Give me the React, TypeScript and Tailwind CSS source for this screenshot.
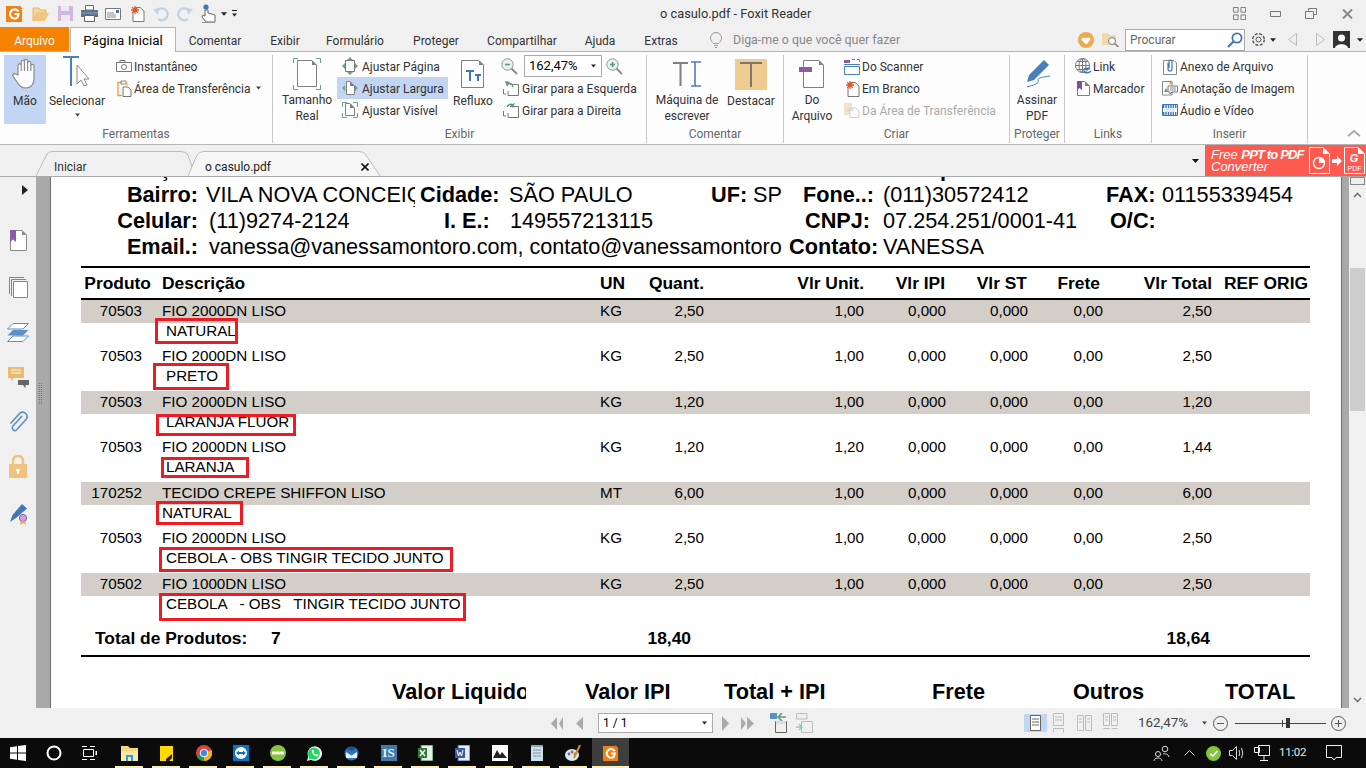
import React from "react";

const S = ({ w, h, children, className }: { w: number; h: number; children: React.ReactNode; className?: string }) => (
  <svg width={w} height={h} viewBox={`0 0 ${w} ${h}`} fill="none" className={"shrink-0 " + (className ?? "")}>
    {children}
  </svg>
);
const Doc = ({ x = 0, y = 0, w = 14, h = 18, c = "#7f7f7f", f = "#fff" }: any) => (
  <g>
    <path d={`M${x + .5} ${y + .5}H${x + w - 5}L${x + w - .5} ${y + 5}V${y + h - .5}H${x + .5}Z`} stroke={c} fill={f} />
    <path d={`M${x + w - 5} ${y + .5}V${y + 5}H${x + w - .5}Z`} fill={c} />
  </g>
);

/* ---------- title bar icons ---------- */
const FoxitLogo = ({ s = 17 }: { s?: number }) => (
  <svg width={s} height={s} viewBox="0 0 17 17" className="shrink-0">
    <path d="M0 1H12L16 5V17H0Z" fill="#f47f13" />
    <path d="M13 0L17 4H13Z" fill="#f47f13" />
    <path d="M12.5 6.5A4.6 4.6 0 1 0 11.5 12.5L12.5 9H8.5" stroke="#fff" strokeWidth="2.2" fill="none" />
  </svg>
);
const QOpen = () => (
  <S w={18} h={16}><path d="M1 2H7L9 4H14V7H5L1 15Z" fill="#f3d79e" stroke="#e5b566" /><path d="M5 7H17L13 15H1Z" fill="#f0c67e" /></S>
);
const QSave = () => (
  <S w={15} h={15}><path d="M0 0H15V15H0Z" fill="#cdb9db" /><path d="M3 0H11V5H3Z" fill="#efe8f4" /><path d="M3 9H12V15H3Z" fill="#efe8f4" /></S>
);
const QPrint = () => (
  <S w={17} h={17}><path d="M4.5.5H12.5V5H4.5Z" stroke="#666" fill="#fff" /><path d="M0 5H17V12H0Z" fill="#6d7278" /><path d="M0 7H17V9H0Z" fill="#5b8fbf" /><path d="M3.5 10.5H13.5V16.5H3.5Z" stroke="#666" fill="#fff" /></S>
);
const QMail = () => (
  <S w={16} h={12}><path d="M.5 .5H15.5V11.5H.5Z" stroke="#777" fill="#fff" /><path d="M2 5H9M2 7H11M2 9H11" stroke="#888" /><path d="M11 2H14V5H11Z" fill="#3f77b5" /></S>
);
const Star = ({ x = 4, y = 4, r = 4 }: any) => (
  <g stroke="#e2562c" strokeWidth="1.3"><path d={`M${x - r} ${y}H${x + r}M${x} ${y - r}V${y + r}M${x - r * .7} ${y - r * .7}L${x + r * .7} ${y + r * .7}M${x - r * .7} ${y + r * .7}L${x + r * .7} ${y - r * .7}`} /></g>
);
const QNew = () => (
  <S w={15} h={17}><path d="M5 2.5H10L14 6V16.5H3V7" stroke="#777" fill="#fff" /><Star x={5} y={5} r={4} /></S>
);
const Undo = ({ flip }: { flip?: boolean }) => (
  <S w={16} h={16} className={flip ? "-scale-x-100" : ""}><path d="M3 6.5A6 6 0 1 1 5 13" stroke="#bcd0e6" strokeWidth="2.2" /><path d="M0 3L6 2.5 5 9Z" fill="#bcd0e6" /></S>
);
const QHand = () => (
  <S w={16} h={20}><circle cx="5" cy="3" r="2.6" fill="#3f77b5" /><path d="M4 6V12L2 11 1 13 5 18H14V11L7 9V6Z" fill="#fff" stroke="#666" /><path d="M1 18.5H14" stroke="#999" /></S>
);
const Caret = ({ c = "#333", w = 7 }: { c?: string; w?: number }) => (
  <svg width={w} height={4} viewBox="0 0 7 4" className="shrink-0"><path d="M0 0H7L3.5 4Z" fill={c} /></svg>
);

/* ---------- ribbon icons ---------- */
const HandBig = () => (
  <S w={26} h={32}>
    <path d="M6 17V7.5a1.6 1.6 0 0 1 3.2 0V13V4a1.6 1.6 0 0 1 3.2 0V13V3a1.6 1.6 0 0 1 3.2 0V13V5a1.6 1.6 0 0 1 3.2 0V13V8a1.6 1.6 0 0 1 3.2 0V21c0 5-3 9-8 9s-7-2-9-6L1 18c-1-2 2-3 3-2Z" fill="#fff" stroke="#8a8a8a" strokeWidth="1.2" />
  </S>
);
const TCursor = () => (
  <S w={28} h={36}>
    <path d="M0 1H16M8 1V30" stroke="#4a7ebb" strokeWidth="2" />
    <path d="M14 9V28L18 24 21 30 24 29 21 23H26Z" fill="#fff" stroke="#8a8a8a" />
  </S>
);
const Camera = () => (
  <S w={16} h={12}><path d="M.5 2.5H15.5V11.5H.5Z" stroke="#777" fill="#fff" /><path d="M4 2V.5H9V2" stroke="#777" /><circle cx="8" cy="7" r="2.5" stroke="#777" /></S>
);
const Clip = () => (
  <S w={15} h={17}><path d="M5 2.5H1V15.5H5" stroke="#e5a64b" strokeWidth="1.4" /><path d="M4 1H9V4H4Z" stroke="#888" /><path d="M9 2.5H10V6" stroke="#e5a64b" /><path d="M6 7H11L14 10V16.5H6Z" stroke="#777" fill="#fff" /></S>
);
const Corners = ({ w, h, c = "#6aa18f" }: any) => (
  <path d={`M.5 5V.5H5M${w - 5} .5H${w - .5}V5M${w - .5} ${h - 5}V${h - .5}H${w - 5}M5 ${h - .5}H.5V${h - 5}`} stroke={c} />
);
const RealSize = () => (
  <S w={28} h={32}><Corners w={28} h={32} /><Doc x={4} y={2} w={20} h={27} /></S>
);
const FitPage = () => (
  <S w={18} h={18}><path d="M9 0L6 3H12ZM9 18L6 15H12Z" fill="#6aa18f" /><path d="M1 9L4 6V12ZM17 9L14 6V12Z" fill="#6aa18f" /><path d="M4.5 3.5H13.5V14.5H4.5Z" stroke="#777" fill="#fff" /></S>
);
const FitWidth = () => (
  <S w={16} h={14}><path d="M0 7L3 4V10ZM16 7L13 4V10Z" fill="#6aa18f" /><Doc x={4} y={0} w={9} h={14} /></S>
);
const FitVis = () => (
  <S w={16} h={16}><Corners w={16} h={16} /><Doc x={3} y={1} w={10} h={13} /></S>
);
const Reflow = () => (
  <S w={24} h={28}>
    <Doc x={0} y={0} w={23} h={28} />
    <path d="M5 11H13M9 11V21M14 15H20M17 15V21" stroke="#3f77b5" strokeWidth="2" />
  </S>
);
const Zoom = ({ plus }: { plus?: boolean }) => (
  <S w={17} h={17}>
    <circle cx="6.5" cy="6.5" r="5.7" fill="#e7f1ec" stroke="#8a9a94" />
    <path d="M4 6.5H9" stroke="#5c9a80" strokeWidth="1.6" />
    {plus && <path d="M6.5 4V9" stroke="#5c9a80" strokeWidth="1.6" />}
    <path d="M10.5 10.5L16 16" stroke="#888" strokeWidth="1.8" />
  </S>
);
const Rotate = ({ flip }: { flip?: boolean }) => (
  <S w={16} h={16}>
    <path d="M7 4.5H15.5V15.5H5V11" stroke="#777" fill="#fff" />
    <path d="M.5 9V14M.5 14H3" stroke="#777" />
    <path d={flip ? "M4 5Q6 1 10 3" : "M10 7Q9 2 4 4"} stroke="#5c9a80" strokeWidth="1.5" />
    <path d={flip ? "M12 1L10 6 7 3Z" : "M2 1L7 2 4 7Z"} fill="#5c9a80" />
  </S>
);
const Typewriter = () => (
  <S w={30} h={26}>
    <path d="M1 2H16M8.5 2V25" stroke="#7f7f7f" strokeWidth="2" />
    <path d="M19 1H23V25H19M23 25H29M29 1H23" stroke="#4a7ebb" strokeWidth="1.6" />
  </S>
);
const Highlight = () => (
  <div className="w-[32px] h-[31px] bg-[#f0cb8f] flex items-center justify-center">
    <S w={24} h={26}><path d="M1 2H23M12 2V26" stroke="#777" strokeWidth="2" /></S>
  </div>
);
const FromFile = () => (
  <S w={26} h={28}><Doc x={4} y={0} w={21} h={28} /><path d="M0 7H13V12H0Z" fill="#8d5ba6" /></S>
);
const Scanner = () => (
  <S w={16} h={17}><path d="M0 2H6V5H0Z" fill="#8d5ba6" /><path d="M8 1.5H11M13 1.5H15.5V4" stroke="#888" /><path d="M.5 8.5H15.5M.5 8.5V16.5H15.5V8.5" stroke="#4a7ebb" /><path d="M0 6.5H16" stroke="#4a7ebb" /></S>
);
const Pasted = () => (
  <S w={16} h={16} className="opacity-40"><path d="M0 1H8V13H0Z" fill="#e5c07a" /><path d="M6 6H12L15 9V15.5H6Z" stroke="#888" fill="#fff" /><path d="M3 8H9" stroke="#8d5ba6" /></S>
);
const Pen = () => (
  <S w={28} h={30}>
    <path d="M21 1L26 6 11 21 4 23 6 16Z" fill="#4a7ebb" />
    <path d="M4 28C10 26 17 25 15 21C14 19 20 18 27 17" stroke="#4a7ebb" />
  </S>
);
const Globe = () => (
  <S w={17} h={16}>
    <circle cx="7.5" cy="7.5" r="7" stroke="#777" fill="#fff" />
    <path d="M.5 7.5H14.5M7.5.5V14.5M2 3.5H13M2 11.5H13" stroke="#777" />
    <ellipse cx="7.5" cy="7.5" rx="3.5" ry="7" stroke="#777" />
    <path d="M8 12Q12 9 15 11M9 14Q13 16 16 13" stroke="#3f77b5" strokeWidth="1.6" />
  </S>
);
const Bookmark = () => (
  <S w={13} h={15}><Doc x={0} y={0} w={13} h={15} /><path d="M0 0H5V9L2.5 7 0 9Z" fill="#7d4e9a" /></S>
);
const Attach = () => (
  <S w={14} h={17}><path d="M.5 2.5H11L13.5 5V16.5H.5Z" stroke="#888" fill="#fff" /><path d="M5 5V11a2 2 0 0 0 4 0V3.5a1.5 1.5 0 0 0-3 0V10" stroke="#3f77b5" strokeWidth="1.2" /></S>
);
const ImgNote = () => (
  <S w={16} h={16}>
    <path d="M.5 1.5H10V15H.5Z" stroke="#888" fill="#fff" />
    <path d="M2 12L4 8 6 12Z" fill="#5c9a80" />
    <circle cx="9" cy="3" r="1.5" fill="#e5a64b" />
    <path d="M6 6H15.5V12H10L8 14V12H6Z" stroke="#777" fill="#fff" />
    <path d="M8 8H14M8 10H14" stroke="#888" />
  </S>
);
const Film = () => (
  <S w={16} h={12}><path d="M.5 .5H15.5V11.5H.5Z" stroke="#3f77b5" fill="#fff" /><path d="M1 2.5H15M1 9.5H15" stroke="#3f77b5" strokeWidth="3" strokeDasharray="1.4 1" /><path d="M3 4H13V8H3Z" fill="#dfe9f4" /></S>
);

/* ---------- ribbon helpers ---------- */
const Big = ({ w, icon, lines, active, tail }: { w: number; icon: React.ReactNode; lines: string[]; active?: boolean; tail?: React.ReactNode }) => (
  <div style={{ width: w }} className={"h-[69px] flex flex-col items-center shrink-0 " + (active ? "bg-[#c2d5f2]" : "")}>
    <div className="h-[38px] flex items-center justify-center">{icon}</div>
    {lines.map((l) => (
      <div key={l} className="h-[16px] leading-[16px] text-center whitespace-nowrap">{l}</div>
    ))}
    {tail}
  </div>
);
const Small = ({ icon, text, active, disabled, iw = 20, tail }: { icon: React.ReactNode; text: string; active?: boolean; disabled?: boolean; iw?: number; tail?: React.ReactNode }) => (
  <div className={"h-[22px] flex items-center whitespace-nowrap " + (active ? "bg-[#c2d5f2] " : "") + (disabled ? "text-[#aaa]" : "")}>
    <div style={{ width: iw }} className="flex items-center justify-center shrink-0">{icon}</div>
    <span className="pt-[2px]">{text}</span>
    {tail}
  </div>
);
const Group = ({ w, label, children }: { w: number; label: string; children: React.ReactNode }) => (
  <div style={{ width: w }} className="h-[88px] shrink-0 flex flex-col border-r border-[#c8c8c8]">
    <div className="h-[71px] flex">{children}</div>
    <div className="h-[16px] leading-[16px] text-center text-[#666]">{label}</div>
  </div>
);

/* ---------- document data ---------- */
type It = [string, string, string, string, string, string, string];
const items: { r: It; sub: string; gray: boolean; left: string }[] = [
  { r: ["70503", "FIO 2000DN LISO", "KG", "2,50", "1,00", "0,00", "2,50"], sub: "NATURAL", gray: true, left: "pl-[4px]" },
  { r: ["70503", "FIO 2000DN LISO", "KG", "2,50", "1,00", "0,00", "2,50"], sub: "PRETO", gray: false, left: "pl-[4px]" },
  { r: ["70503", "FIO 2000DN LISO", "KG", "1,20", "1,00", "0,00", "1,20"], sub: "LARANJA FLUOR", gray: true, left: "pl-[4px]" },
  { r: ["70503", "FIO 2000DN LISO", "KG", "1,20", "1,20", "0,00", "1,44"], sub: "LARANJA", gray: false, left: "pl-[4px]" },
  { r: ["170252", "TECIDO CREPE SHIFFON LISO", "MT", "6,00", "1,00", "0,00", "6,00"], sub: "NATURAL", gray: true, left: "" },
  { r: ["70503", "FIO 2000DN LISO", "KG", "2,50", "1,00", "0,00", "2,50"], sub: "CEBOLA - OBS TINGIR TECIDO JUNTO", gray: false, left: "pl-[4px]" },
  { r: ["70502", "FIO 1000DN LISO", "KG", "2,50", "1,00", "0,00", "2,50"], sub: "CEBOLA \u00a0 - OBS \u00a0 TINGIR TECIDO JUNTO", gray: true, left: "pl-[4px]" },
];
const boxes = [
  "left-[104px] top-[141px] w-[83px] h-[26px]",
  "left-[102px] top-[186px] w-[76px] h-[27px]",
  "left-[105px] top-[237px] w-[140px] h-[22px]",
  "left-[110px] top-[280px] w-[88px] h-[21px]",
  "left-[105px] top-[324px] w-[87px] h-[24px]",
  "left-[108px] top-[370px] w-[294px] h-[25px]",
  "left-[108px] top-[416px] w-[307px] h-[28px]",
];

const Cell = ({ c, children }: { c: string; children?: React.ReactNode }) => <div className={c}>{children}</div>;

const Page = () => (
  <div className="relative flex-1 min-w-0 bg-white overflow-hidden font-['Liberation_Sans',Arial,sans-serif] text-black">
    {/* info block */}
    <div className="-mt-[21px] text-[21.7px] leading-[26px] whitespace-nowrap">
      <div className="h-[26px] flex">
        <div className="w-[119px] text-right">ç</div>
        <div className="ml-[770px] font-bold">p</div>
      </div>
      <div className="h-[26px] flex">
        <div className="w-[147px] text-right font-bold">Bairro:</div>
        <div className="ml-[8px] w-[209px] overflow-hidden">VILA NOVA CONCEIÇÃO</div>
        <div className="ml-[5px] w-[89px] font-bold">Cidade:</div>
        <div className="w-[202px]">SÃO PAULO</div>
        <div className="w-[42px] font-bold">UF:</div>
        <div className="w-[50px]">SP</div>
        <div className="w-[80px] font-bold">Fone..:</div>
        <div className="w-[223px]">(011)30572412</div>
        <div className="w-[56px] font-bold">FAX:</div>
        <div>01155339454</div>
      </div>
      <div className="h-[26px] flex">
        <div className="w-[147px] text-right font-bold">Celular:</div>
        <div className="ml-[11px] w-[235px]">(11)9274-2124</div>
        <div className="w-[66px] font-bold">I. E.:</div>
        <div className="w-[295px]">149557213115</div>
        <div className="w-[78px] font-bold">CNPJ:</div>
        <div className="w-[227px]">07.254.251/0001-41</div>
        <div className="font-bold">O/C:</div>
      </div>
      <div className="h-[26px] flex">
        <div className="w-[147px] text-right font-bold">Email.:</div>
        <div className="ml-[11px] w-[580px] tracking-[-0.06px]">vanessa@vanessamontoro.com, contato@vanessamontoro</div>
        <div className="w-[94px] font-bold">Contato:</div>
        <div>VANESSA</div>
      </div>
    </div>

    {/* table */}
    <div className="ml-[30px] w-[1229px] mt-[6px]">
      <div className="h-[34px] border-t-2 border-b-2 border-black flex items-center text-[17.4px] font-bold whitespace-nowrap">
        <Cell c="w-[70px] text-right">Produto</Cell>
        <Cell c="ml-[11px] w-[438px]">Descrição</Cell>
        <Cell c="w-[40px]">UN</Cell>
        <Cell c="w-[64px] text-right">Quant.</Cell>
        <Cell c="w-[160px] text-right">Vlr Unit.</Cell>
        <Cell c="w-[81px] text-right">Vlr IPI</Cell>
        <Cell c="w-[82px] text-right">Vlr ST</Cell>
        <Cell c="w-[73px] text-right">Frete</Cell>
        <Cell c="w-[112px] text-right">Vlr Total</Cell>
        <Cell c="w-[96px] text-right">REF ORIG</Cell>
      </div>
      <div className="text-[15.2px] whitespace-nowrap">
        {items.map((it, i) => (
          <div key={i}>
            <div className={"h-[22.75px] flex items-center " + (it.gray ? "bg-[#d3cfc8]" : "")}>
              <Cell c="w-[61px] text-right">{it.r[0]}</Cell>
              <Cell c="ml-[20px] w-[438px]">{it.r[1]}</Cell>
              <Cell c="w-[40px]">{it.r[2]}</Cell>
              <Cell c="w-[64px] text-right">{it.r[3]}</Cell>
              <Cell c="w-[160px] text-right">{it.r[4]}</Cell>
              <Cell c="w-[82px] text-right">0,000</Cell>
              <Cell c="w-[82px] text-right">0,000</Cell>
              <Cell c="w-[75px] text-right">{it.r[5]}</Cell>
              <Cell c="w-[109px] text-right">{it.r[6]}</Cell>
            </div>
            <div className="h-[22.75px] pb-[6px] flex items-center">
              <div className={"ml-[81px] " + it.left}>{it.sub}</div>
            </div>
          </div>
        ))}
      </div>
      <div className="mt-[8px] h-[30px] pb-[5px] border-b-2 border-black flex items-center text-[17.4px] font-bold whitespace-nowrap">
        <Cell c="ml-[14px] w-[176px]">Total de Produtos:</Cell>
        <Cell c="w-[100px]">7</Cell>
        <Cell c="w-[320px] text-right">18,40</Cell>
        <Cell c="w-[519px] text-right">18,64</Cell>
      </div>
    </div>

    {/* totals */}
    <div className="mt-[22px] h-[26px] flex text-[21.7px] leading-[26px] font-bold whitespace-nowrap">
      <div className="ml-[341px] w-[134px] overflow-hidden">Valor Liquido</div>
      <div className="ml-[59px] w-[139px]">Valor IPI</div>
      <div className="w-[208px]">Total + IPI</div>
      <div className="w-[141px]">Frete</div>
      <div className="w-[152px]">Outros</div>
      <div>TOTAL</div>
    </div>

    {/* red annotation boxes */}
    {boxes.map((b) => (
      <div key={b} className={"absolute border-[3px] border-[#ed1c24] " + b} />
    ))}
  </div>
);

/* ---------- side panel ---------- */
const SideIcons = () => (
  <div className="w-[36px] shrink-0 flex flex-col items-center bg-[#f0f0f0]">
    <svg width="6" height="10" viewBox="0 0 6 10" className="mt-[8px] ml-[14px]"><path d="M0 0L6 5 0 10Z" fill="#222" /></svg>
    <S w={17} h={21} className="mt-[35px]"><Doc x={0} y={0} w={17} h={21} c="#888" /><path d="M0 0H6V12L3 9.5 0 12Z" fill="#8d5ba6" /></S>
    <S w={19} h={21} className="mt-[26px]"><path d="M.5 .5H15M.5 .5V17M2.5 2.5H17M2.5 2.5V19" stroke="#5b8fc7" /><path d="M4.5 4.5H18.5V20.5H4.5Z" stroke="#5b8fc7" fill="#fff" /></S>
    <S w={22} h={19} className="mt-[25px]"><path d="M6 .5H21.5L16 6H.5Z" stroke="#5b8fc7" fill="#fff" /><path d="M6 7H21.5L16 12.5H.5Z" fill="#5b8fc7" /><path d="M6 13H21.5L16 18.5H.5Z" stroke="#5b8fc7" fill="#fff" /></S>
    <S w={21} h={21} className="mt-[25px]"><path d="M0 0H16V11H6L3 14V11H0Z" fill="#edb96b" /><path d="M3 3H13M3 6H13" stroke="#fff" /><path d="M10 13H21V18H18L17 21 15 18H10Z" fill="#666" /></S>
    <S w={19} h={23} className="mt-[21px]"><path d="M13 5L4 15a2.6 2.6 0 0 0 3.7 3.7L17 8.5a4.4 4.4 0 0 0-6.2-6.2L1.5 12.5" transform="translate(0 2)" stroke="#5b8fc7" strokeWidth="1.6" /></S>
    <S w={18} h={23} className="mt-[23px]"><path d="M4 10V6a5 5 0 0 1 10 0V10" stroke="#edc37e" strokeWidth="2.4" /><path d="M0 9H18V23H0Z" fill="#edc37e" /><path d="M7 14H11V16H10V19H8V16H7Z" fill="#fff" /></S>
    <S w={20} h={22} className="mt-[25px]"><path d="M14 1L19 5.5 8 15 2 19 4.5 12Z" fill="#3f77b5" /><circle cx="15" cy="15" r="3.6" fill="#c7a6d8" stroke="#8d5ba6" /><path d="M13 18L12 22 15 20 18 22 17 18" fill="#e5a64b" /></S>
  </div>
);

/* ---------- task bar ---------- */
const TB = ({ children, active }: { children: React.ReactNode; active?: boolean }) => (
  <div className={"relative h-[30px] w-[37px] shrink-0 flex items-center justify-center " + (active ? "bg-[#3e3e3e]" : "")}>
    {children}
    <div className={"absolute bottom-0 h-[2px] bg-[#fdeeb8] " + (active ? "inset-x-0" : "left-[4px] right-[5px]")} />
  </div>
);
const tab = "flex items-center justify-center pt-[3px]";

export default function App() {
  return (
    <div className="w-[1366px] h-[768px] overflow-hidden flex flex-col bg-[#f0f0f0] text-[12px] text-[#333] font-['Roboto','Noto_Sans',sans-serif]">
      {/* title bar */}
      <div className="h-[27px] shrink-0 flex items-center relative">
        <div className="ml-[6px] flex items-center">
          <FoxitLogo />
          <div className="ml-[9px]"><QOpen /></div>
          <div className="ml-[8px]"><QSave /></div>
          <div className="ml-[8px]"><QPrint /></div>
          <div className="ml-[7px]"><QMail /></div>
          <div className="ml-[9px]"><QNew /></div>
          <div className="ml-[8px]"><Undo /></div>
          <div className="ml-[8px]"><Undo flip /></div>
          <div className="ml-[8px]"><QHand /></div>
          <div className="ml-[4px]"><Caret c="#222" w={6} /></div>
          <div className="ml-[5px] flex flex-col gap-[2px] items-center"><div className="w-[5px] h-px bg-[#222]" /><Caret c="#222" w={5} /></div>
        </div>
        <div className="absolute left-[660px] top-[5px] text-[12.8px] leading-[17px] whitespace-nowrap">o casulo.pdf - Foxit Reader</div>
        <div className="ml-auto flex items-center">
          <div className="w-[36px] flex justify-center"><S w={13} h={13}><path d="M0 0H5V5H0ZM8 0H13V5H8ZM0 8H5V13H0ZM8 8H13V13H8Z" stroke="#777" transform="translate(.5 .5) scale(.93)" /></S></div>
          <div className="w-[36px] flex justify-center"><S w={11} h={6}><path d="M.5 .5H10.5V5.5H.5Z" stroke="#777" /></S></div>
          <div className="w-[36px] flex justify-center"><S w={12} h={11}><path d="M3.5 2.5V.5H11.5V6.5H8.5M.5 3.5H8.5V10.5H.5Z" stroke="#777" /></S></div>
          <div className="w-[36px] flex justify-center"><S w={11} h={10}><path d="M1 .5L10 9.5M10 .5L1 9.5" stroke="#888" strokeWidth="2" /></S></div>
          <div className="w-[1px]" />
        </div>
      </div>

      {/* ribbon tabs */}
      <div className="h-[25px] shrink-0 flex border-b border-[#b5b5b5] whitespace-nowrap">
        <div className={"w-[69px] h-[24px] bg-[#f58200] text-white " + tab}>Arquivo</div>
        <div className={"ml-px w-[106px] h-[25px] bg-[#fdfdfd] border-x border-t border-[#b5b5b5] text-black text-[13.4px] " + tab}>Página Inicial</div>
        <div className={"w-[78px] " + tab}>Comentar</div>
        <div className={"w-[62px] " + tab}>Exibir</div>
        <div className={"w-[78px] " + tab}>Formulário</div>
        <div className={"w-[84px] " + tab}>Proteger</div>
        <div className={"w-[88px] " + tab}>Compartilhar</div>
        <div className={"w-[68px] " + tab}>Ajuda</div>
        <div className={"w-[54px] " + tab}>Extras</div>
        <div className="ml-[22px] flex items-center pt-[2px]">
          <S w={12} h={16}><path d="M3.5 11.5C2 10 .5 8.5.5 6a5.5 5.5 0 0 1 11 0c0 2.5-1.5 4-3 5.5ZM4 13.5H8M5 15.5H7" stroke="#999" /></S>
        </div>
        <div className="ml-[11px] flex items-center pt-[3px] text-[12.4px] text-[#888]">Diga-me o que você quer fazer</div>
        <div className="ml-auto w-[288px] flex items-center pt-[1px]">
          <S w={16} h={16}><circle cx="8" cy="8" r="8" fill="#eea94e" /><path d="M8 12.5L4 8.5C2.5 6.5 5.5 4 8 6.5 10.5 4 13.5 6.5 12 8.5Z" fill="#fff" /></S>
          <div className="ml-[8px]"><S w={17} h={15}><path d="M0 1H6L8 3H14V13H0Z" fill="#f1d9ad" /><circle cx="10" cy="9" r="3.5" fill="#fff" stroke="#777" /><path d="M12.5 11.5L16.5 15" stroke="#777" strokeWidth="1.4" /></S></div>
          <div className="ml-[6px] w-[120px] h-[22px] bg-white border border-[#aaa] flex items-center pl-[4px] text-[#666]">
            Procurar
            <div className="ml-auto mr-[1px]"><S w={16} h={16}><circle cx="10" cy="6" r="4.6" stroke="#3f77b5" strokeWidth="1.8" /><path d="M6.5 9.5L1 15" stroke="#3f77b5" strokeWidth="2.2" /></S></div>
          </div>
          <div className="ml-[6px]"><S w={15} h={15}><circle cx="7.5" cy="7.5" r="2.5" stroke="#555" /><circle cx="7.5" cy="7.5" r="5.8" stroke="#555" strokeWidth="1.4" strokeDasharray="3 1.55" /></S></div>
          <div className="ml-[4px]"><Caret c="#222" w={6} /></div>
          <div className="ml-[12px]"><S w={9} h={13}><path d="M8.5 .5V12.5L.5 6.5Z" stroke="#bbb" /></S></div>
          <div className="ml-[19px]"><S w={9} h={13}><path d="M.5 .5V12.5L8.5 6.5Z" stroke="#bbb" /></S></div>
          <div className="ml-[8px]"><S w={17} h={17}><path d="M0 0H17V17H0Z" fill="#333" /><circle cx="8.5" cy="7" r="3.5" fill="#fff" /><path d="M2 17C3 12 14 12 15 17Z" fill="#fff" /></S></div>
          <div className="ml-[7px]"><Caret c="#222" w={6} /></div>
        </div>
      </div>

      {/* ribbon */}
      <div className="h-[93px] shrink-0 bg-[#fdfdfd] border-b border-[#b5b5b5] pt-[3px] flex">
        <Group w={273} label="Ferramentas">
          <div className="ml-[4px]"><Big w={42} active icon={<HandBig />} lines={["Mão"]} /></div>
          <Big w={62} icon={<TCursor />} lines={["Selecionar"]} tail={<div className="mt-[4px]"><Caret c="#444" w={5} /></div>} />
          <div className="ml-[6px]">
            <Small icon={<Camera />} text="Instantâneo" />
            <Small icon={<Clip />} text="Área de Transferência" tail={<div className="ml-[5px]"><Caret c="#444" w={5} /></div>} />
          </div>
        </Group>
        <Group w={374} label="Exibir">
          <div className="ml-[6px]"><Big w={56} icon={<RealSize />} lines={["Tamanho", "Real"]} /></div>
          <div className="ml-[2px] w-[111px]">
            <Small icon={<FitPage />} text="Ajustar Página" iw={25} />
            <Small icon={<FitWidth />} text="Ajustar Largura" iw={25} active />
            <Small icon={<FitVis />} text="Ajustar Visível" iw={25} />
          </div>
          <Big w={50} icon={<Reflow />} lines={["Refluxo"]} />
          <div className="ml-[1px]">
            <div className="h-[22px] flex items-center">
              <div className="ml-[2px]"><Zoom /></div>
              <div className="ml-[6px] w-[78px] h-[22px] border border-[#aaa] bg-white flex items-center pl-[4px] text-[13px] text-black">
                162,47%
                <div className="ml-auto mr-[5px]"><Caret c="#222" w={5} /></div>
              </div>
              <div className="ml-[4px]"><Zoom plus /></div>
            </div>
            <Small icon={<Rotate />} text="Girar para a Esquerda" iw={23} />
            <Small icon={<Rotate flip />} text="Girar para a Direita" iw={23} />
          </div>
        </Group>
        <Group w={137} label="Comentar">
          <Big w={80} icon={<Typewriter />} lines={["Máquina de", "escrever"]} />
          <Big w={48} icon={<Highlight />} lines={["Destacar"]} />
        </Group>
        <Group w={226} label="Criar">
          <Big w={56} icon={<FromFile />} lines={["Do", "Arquivo"]} />
          <div className="ml-[2px]">
            <Small icon={<Scanner />} text="Do Scanner" />
            <Small icon={<QNew />} text="Em Branco" />
            <Small icon={<Pasted />} text="Da Área de Transferência" disabled />
          </div>
        </Group>
        <Group w={55} label="Proteger">
          <Big w={54} icon={<Pen />} lines={["Assinar", "PDF"]} />
        </Group>
        <Group w={87} label="Links">
          <div className="ml-[8px]">
            <Small icon={<Globe />} text="Link" />
            <Small icon={<Bookmark />} text="Marcador" />
          </div>
        </Group>
        <Group w={156} label="Inserir">
          <div className="ml-[8px]">
            <Small icon={<Attach />} text="Anexo de Arquivo" />
            <Small icon={<ImgNote />} text="Anotação de Imagem" />
            <Small icon={<Film />} text="Áudio e Vídeo" />
          </div>
        </Group>
        <div className="ml-[38px] mt-[74px]"><S w={16} h={8}><path d="M2 7L8 2 14 7" stroke="#aaa" strokeWidth="2" /></S></div>
      </div>

      {/* document tabs */}
      <div className="h-[32px] shrink-0 border-b border-[#aaa] flex items-end relative">
        <div className="relative ml-[36px] w-[160px] h-[25px] pl-[18px] pt-[6px] flex items-center">
          <svg width="160" height="25" viewBox="0 0 160 25" className="absolute inset-0"><path d="M0 25L11 3Q13 .5 17 .5H145Q150 .5 152 4L159 25" stroke="#bbb" fill="#f0f0f0" /></svg>
          <span className="relative">Iniciar</span>
        </div>
        <div className="relative -ml-[8px] w-[194px] h-[25px] pl-[17px] pt-[6px] flex items-center">
          <svg width="194" height="25" viewBox="0 0 194 25" className="absolute inset-0"><path d="M0 25L9 4Q11 .5 16 .5H171Q176 .5 178 4L192 25" stroke="#bbb" fill="#f6f6f6" /></svg>
          <span className="relative text-[#222]">o casulo.pdf</span>
          <svg width="8" height="8" viewBox="0 0 8 8" className="absolute left-[173px] top-[12px]"><path d="M.5 .5L7.5 7.5M7.5 .5L.5 7.5" stroke="#111" strokeWidth="1.6" /></svg>
        </div>
        <div className="ml-auto self-center mr-[5px]"><Caret c="#111" w={9} /></div>
        <div className="w-[161px] h-[31px] self-start bg-[#ff5a50] flex items-center text-white pl-[6px] font-['Liberation_Sans',sans-serif] italic text-[13px] leading-[12px]">
          <div className="w-[98px] whitespace-nowrap">
            <div>Free <b className="tracking-[-0.85px]">PPT to PDF</b></div>
            <div>Converter</div>
          </div>
          <S w={21} h={27}><path d="M.5 .5H14L20.5 7V26.5H.5Z" stroke="#fff" /><path d="M14 .5V7H20.5Z" fill="#fff" /><circle cx="10" cy="16" r="5.5" stroke="#fff" strokeWidth="1.4" /><path d="M10 10.5A5.5 5.5 0 0 1 15.5 16H10Z" fill="#fff" /></S>
          <div className="ml-[2px]"><S w={10} h={10}><path d="M0 3H5V0L10 5 5 10V7H0Z" fill="#fff" /></S></div>
          <div className="ml-[2px]"><svg width="21" height="27" viewBox="0 0 21 27"><path d="M.5 .5H14L20.5 7V26.5H.5Z" stroke="#fff" fill="none" /><path d="M14 .5V7H20.5Z" fill="#fff" /><text x="10" y="15" textAnchor="middle" fontSize="11" fontWeight="700" fill="#fff">G</text><text x="10.5" y="24" textAnchor="middle" fontSize="7" fill="#fff" fontStyle="normal">PDF</text></svg></div>
        </div>
      </div>

      {/* main */}
      <div className="h-[531px] shrink-0 flex overflow-hidden">
        <SideIcons />
        <div className="w-[15px] shrink-0 bg-[#a9a9a9] border-r border-[#6e6e6e] flex flex-col">
          <div className="mt-[206px] ml-[3px] h-[44px] w-[3px] flex flex-wrap content-start gap-[1px]">
            {Array.from({ length: 22 }).map((_, i) => <div key={i} className="w-px h-px bg-[#777]" />)}
          </div>
        </div>
        <Page />
        <div className="w-[8px] shrink-0 bg-[#a9a9a9] border-l border-[#6e6e6e]" />
        <div className="w-[17px] shrink-0 bg-[#f0f0f0] flex flex-col">
          <div className="h-[8px] mx-px bg-[#eee] border border-[#888]" />
          <div className="h-[16px] flex items-center justify-center mt-[2px]"><S w={9} h={6}><path d="M1 5L4.5 1.5 8 5" stroke="#666" strokeWidth="1.4" /></S></div>
          <div className="mt-[65px] h-[143px] mx-px bg-[#cdcdcd]" />
          <div className="mt-auto h-[16px] flex items-center justify-center"><S w={9} h={6}><path d="M1 1L4.5 4.5 8 1" stroke="#666" strokeWidth="1.4" /></S></div>
        </div>
      </div>

      {/* status bar */}
      <div className="h-[30px] shrink-0 flex items-center whitespace-nowrap">
        <div className="ml-[551px]"><S w={13} h={13}><path d="M6 0V13L0 6.5ZM12 0V13L8 6.5Z" fill="#aaa" /></S></div>
        <div className="ml-[12px]"><S w={7} h={13}><path d="M7 0V13L0 6.5Z" fill="#aaa" /></S></div>
        <div className="ml-[15px] w-[115px] h-[20px] bg-white border border-[#aaa] flex items-center pl-[4px] text-black">
          1 / 1
          <div className="ml-auto mr-[5px]"><Caret c="#222" w={5} /></div>
        </div>
        <div className="ml-[9px]"><S w={7} h={15}><path d="M0 0V15L7 7.5Z" fill="#aaa" /></S></div>
        <div className="ml-[12px]"><S w={13} h={13}><path d="M0 0V13L5 6.5ZM6 0V13L13 6.5Z" fill="#aaa" /></S></div>
        <div className="ml-[16px]"><S w={17} h={20}><path d="M0 0H7V6H0Z" fill="#5b8fc7" /><path d="M12 0L8 4 12 8M8 4H16" stroke="#5c9a80" strokeWidth="1.6" /><path d="M5.5 8.5H16.5V19.5H5.5Z" stroke="#666" /><path d="M6 8H16V11H6Z" fill="#ddd" /></S></div>
        <div className="ml-[9px]"><S w={17} h={20}><path d="M.5 .5H11V6H.5Z" stroke="#bbb" /><path d="M5.5 8.5H16.5V19.5H5.5Z" stroke="#bbb" /><path d="M0 14H6M3 11L6 14 3 17" stroke="#9cc4b4" strokeWidth="1.4" /></S></div>
        <div className="ml-[211px] w-[23px] h-[18px] bg-[#c2d5f2] flex items-center justify-center"><S w={11} h={16}><path d="M.5 .5H10.5V15.5H.5Z" stroke="#666" fill="#fff" /><path d="M2 4H9M2 7H9M2 10H9" stroke="#666" /></S></div>
        <div className="ml-[6px]"><S w={11} h={20}><path d="M.5 .5H10.5V12.5H.5ZM.5 15.5H10.5V19.5M.5 19.5V15.5M2 4H9M2 7H9" stroke="#bbb" /></S></div>
        <div className="ml-[13px]"><S w={15} h={16}><path d="M.5 .5H6.5V15.5H.5ZM8.5 .5H14.5V15.5H8.5ZM2 4H5M2 7H5M10 4H13M10 7H13" stroke="#bbb" /></S></div>
        <div className="ml-[11px]"><S w={15} h={20}><path d="M.5 .5H6.5V12.5H.5ZM8.5 .5H14.5V12.5H8.5ZM.5 15.5H6.5M8.5 15.5H14.5M2 4H5M10 4H13M2 7H5M10 7H13" stroke="#bbb" /></S></div>
        <div className="ml-[20px] w-[50px] text-[13.4px] text-[#444]">162,47%</div>
        <div className="ml-[14px]"><Caret c="#444" w={5} /></div>
        <div className="ml-[6px]"><S w={15} h={15}><circle cx="7.5" cy="7.5" r="7" stroke="#555" /><path d="M4 7.5H11" stroke="#555" /></S></div>
        <div className="ml-[7px] w-[91px] h-[13px] flex items-center relative">
          <div className="w-full h-px bg-[#444]" />
          <div className="absolute left-[47px] top-[3px] w-px h-[7px] bg-[#444]" />
          <div className="absolute left-[51px] top-[1px] w-[4px] h-[10px] bg-[#333]" />
        </div>
        <div className="ml-[5px]"><S w={15} h={15}><circle cx="7.5" cy="7.5" r="7" stroke="#555" /><path d="M4 7.5H11M7.5 4V11" stroke="#555" /></S></div>
      </div>

      {/* task bar */}
      <div className="h-[30px] shrink-0 bg-[#0b0b0b] flex items-center text-white">
        <div className="ml-[10px] w-[16px]"><S w={16} h={16}><path d="M0 2.2L7 1.2V7.5H0ZM8 1L16 0V7.5H8ZM0 8.5H7V14.8L0 13.8ZM8 8.5H16V16L8 15Z" fill="#fff" /></S></div>
        <div className="ml-[20px]"><S w={16} h={16}><circle cx="8" cy="8" r="6.5" stroke="#fff" strokeWidth="2" /></S></div>
        <div className="ml-[19px]"><S w={16} h={16}><path d="M2.5 4.5H12.5V11.5H2.5Z" stroke="#fff" /><path d="M1 1.5H6M9 1.5H14M1 14.5H6M9 14.5H14" stroke="#fff" /><path d="M14.5 6H16V10H14.5Z" fill="#fff" /></S></div>
        <div className="ml-[14px] flex">
          <TB><S w={17} h={15}><path d="M0 0H7L9 2H17V15H0Z" fill="#f8d775" /><path d="M0 5H17V15H0Z" fill="#fbe9a9" /><path d="M5 15V9H12V15H10V11H7V15Z" fill="#2f9bd8" /></S></TB>
          <TB><S w={13} h={15}><path d="M0 0H13V15H0Z" fill="#ffd800" /><path d="M6 13L12 8V12L9 15H6Z" fill="#222" /></S></TB>
          <TB>
            <S w={16} h={16}><circle cx="8" cy="8" r="8" fill="#db4437" /><path d="M8 8L1 11.5A8 8 0 0 0 8 16Z" fill="#0f9d58" /><path d="M8 8L15.5 5A8 8 0 0 1 8 16Z" fill="#f4b400" /><circle cx="8" cy="8" r="3.8" fill="#4285f4" stroke="#fff" /></S>
          </TB>
          <TB><S w={16} h={16}><path d="M0 0H16V16H0Z" fill="#0e72c4" /><circle cx="8" cy="8" r="6" fill="#fff" /><path d="M3 8L6 5.5V7H10V5.5L13 8 10 10.5V9H6V10.5Z" fill="#0e72c4" /></S></TB>
          <TB><S w={16} h={16}><circle cx="8" cy="8" r="8" fill="#86c33e" /><path d="M2 6.5H14V9.5H2Z" fill="#eef6dd" /></S></TB>
          <TB><S w={17} h={17}><path d="M1 16L2.2 11.5A7.2 7.2 0 1 1 5 14.7Z" fill="#fff" /><path d="M3 12L2.5 14.5 5 13.8A6 6 0 1 0 3 12Z" fill="#25d366" /><path d="M6 5C5 7 8 11.5 11.5 11.5L12.5 10 10.5 9 10 9.8C9 9.5 8 8.5 7.5 7.2L8.2 6.5 7.3 4.7Z" fill="#fff" /></S></TB>
          <TB><S w={15} h={17}><circle cx="7.5" cy="8.5" r="7" fill="#2a73c5" /><path d="M2 7L7.5 10.5 13 7V13H2Z" fill="#eef3fa" /><path d="M3 4Q7 0 12 3L8 6Z" fill="#1a4f8f" /></S></TB>
          <TB><div className="w-[16px] h-[16px] bg-[#3f7aa9] text-[#e6f0f8] text-[13px] font-bold leading-[16px] text-center font-['Liberation_Serif',serif]">IS</div></TB>
          <TB><S w={15} h={16}><path d="M3 0H15V16H3Z" fill="#e7efe7" stroke="#2b7a3e" /><path d="M0 3H9V13H0Z" fill="#2b7a3e" /><path d="M2 5L7 11M7 5L2 11" stroke="#fff" strokeWidth="1.4" /></S></TB>
          <TB><S w={15} h={16}><path d="M3 0H15V16H3Z" fill="#e8ecf6" stroke="#3b5ba5" /><path d="M0 3H10V13H0Z" fill="#3b5ba5" /><path d="M2 5L3.5 11 5 7 6.5 11 8 5" stroke="#fff" /></S></TB>
          <TB><S w={16} h={16}><path d="M0 0H16V16H0Z" fill="#fff" /><path d="M1 13L5 5 8 10 10 7 15 13Z" fill="#222" /></S></TB>
          <TB><S w={14} h={16}><path d="M1 1H13V16H1Z" fill="#cfe0ea" /><path d="M1 0H13V2H1Z" fill="#8fa7b7" /><path d="M3 5H11M3 8H11M3 11H11" stroke="#7e99ab" /></S></TB>
          <TB><S w={17} h={16}><ellipse cx="7" cy="10" rx="7" ry="6" fill="#dfe7ee" /><circle cx="4" cy="9" r="1.4" fill="#3f77b5" /><circle cx="7" cy="7" r="1.4" fill="#d9483b" /><circle cx="10" cy="9" r="1.4" fill="#5da14a" /><path d="M9 13L15 0" stroke="#c98a3a" strokeWidth="2" /></S></TB>
          <TB active><FoxitLogo s={16} /></TB>
        </div>
        <div className="ml-auto flex items-center h-[30px]">
          <S w={17} h={16}><circle cx="5" cy="9" r="2.5" stroke="#ddd" /><path d="M1 16C1 12 9 12 9 16" stroke="#ddd" /><circle cx="12" cy="4" r="2.8" stroke="#ddd" /><path d="M10 9C12 8.4 15.5 9 16 12" stroke="#ddd" /></S>
          <div className="ml-[14px]"><S w={11} h={6}><path d="M.5 5.5L5.5 .5 10.5 5.5" stroke="#ddd" /></S></div>
          <div className="ml-[11px]"><S w={15} h={15}><circle cx="7.5" cy="7.5" r="7.5" fill="#86c33e" /><path d="M4 8L7 10 11.5 5" stroke="#fff" strokeWidth="1.6" /></S></div>
          <div className="ml-[8px]"><S w={15} h={14}><path d="M.5 4.5H3.5L7.5 .5V13.5L3.5 9.5H.5Z" stroke="#ddd" /><path d="M10 4Q11.5 7 10 10M12.5 2Q15 7 12.5 12" stroke="#ddd" /></S></div>
          <div className="ml-[10px]"><S w={16} h={16}><path d="M4.5 .5H15.5V10.5H4.5ZM.5 2.5H5.5V7.5H.5ZM10 11V15M6 15.5H14" stroke="#eee" /></S></div>
          <div className="ml-[9px] w-[28px] text-[11.5px] text-[#e8e8e8] tracking-[-0.3px]">11:02</div>
          <div className="ml-[19px] mr-[24px]"><S w={16} h={16}><path d="M.5 .5H15.5V12.5H10L8 15 6 12.5H.5Z" stroke="#eee" /></S></div>
        </div>
      </div>
    </div>
  );
}
